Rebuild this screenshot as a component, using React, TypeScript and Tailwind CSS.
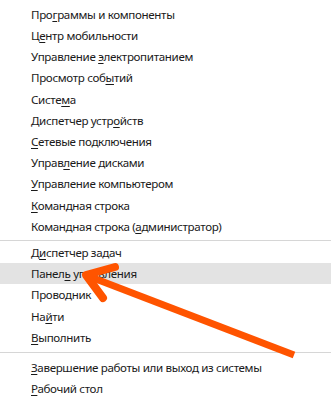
const groups: string[][][] = [
  [
    ['Про', 'г', 'раммы и компоненты'],
    ['Ц', 'е', 'нтр мобильности'],
    ['Управление ', 'э', 'лектропитанием'],
    ['Просмотр соб', 'ы', 'тий'],
    ['Систе', 'м', 'а'],
    ['Диспетчер устр', 'о', 'йств'],
    ['', 'С', 'етевые подключения'],
    ['Управ', 'л', 'ение дисками'],
    ['', 'У', 'правление компьютером'],
    ['', 'К', 'омандная строка'],
    ['Командная строка (', 'а', 'дминистратор)'],
  ],
  [
    ['Д', 'и', 'спетчер задач'],
    ['Панел', 'ь', ' управления'],
    ['Проводник', '', ''],
    ['На', 'й', 'ти'],
    ['', 'В', 'ыполнить'],
  ],
  [
    ['', 'З', 'авершение работы или выход из системы'],
    ['', 'Р', 'абочий стол'],
  ],
]

function Row({ parts, active }: { parts: string[]; active?: boolean }) {
  return (
    <div className={`flex h-[21.2px] items-center pl-[31px] ${active ? 'bg-[#e3e3e3]' : ''}`}>
      <span className="whitespace-pre">
        {parts[0]}
        {parts[1] && <u className="underline-offset-[1.5px]">{parts[1]}</u>}
        {parts[2]}
      </span>
    </div>
  )
}

export default function App() {
  return (
    <div
      className="relative h-[400px] w-[331px] overflow-hidden bg-white text-[11.6px] tracking-[-0.35px] text-[#1a1a1a]"
      style={{ fontFamily: '"Noto Sans", "Open Sans", sans-serif' }}
    >
      <div className="pt-[4px]">
        {groups[0].map((p) => (
          <Row key={p.join('')} parts={p} />
        ))}
      </div>
      <div className="pt-[3px] pb-[1px]">
        <div className="h-px bg-[#d6d6d6]" />
      </div>
      <div>
        {groups[1].map((p, i) => (
          <Row key={p.join('')} parts={p} active={i === 1} />
        ))}
      </div>
      <div className="pt-[4px] pb-[4px]">
        <div className="h-px bg-[#d6d6d6]" />
      </div>
      <div>
        {groups[2].map((p) => (
          <Row key={p.join('')} parts={p} />
        ))}
      </div>

      {/* orange arrow pasted over the screenshot */}
      <svg className="pointer-events-none absolute inset-0" width="331" height="400" viewBox="0 0 331 400">
        <line x1="88" y1="276" x2="294" y2="355" stroke="#ff5400" strokeWidth="7" />
        <polyline
          points="115,267 86,275 103,298"
          fill="none"
          stroke="#ff5400"
          strokeWidth="8"
          strokeLinecap="round"
          strokeLinejoin="round"
        />
      </svg>
    </div>
  )
}
